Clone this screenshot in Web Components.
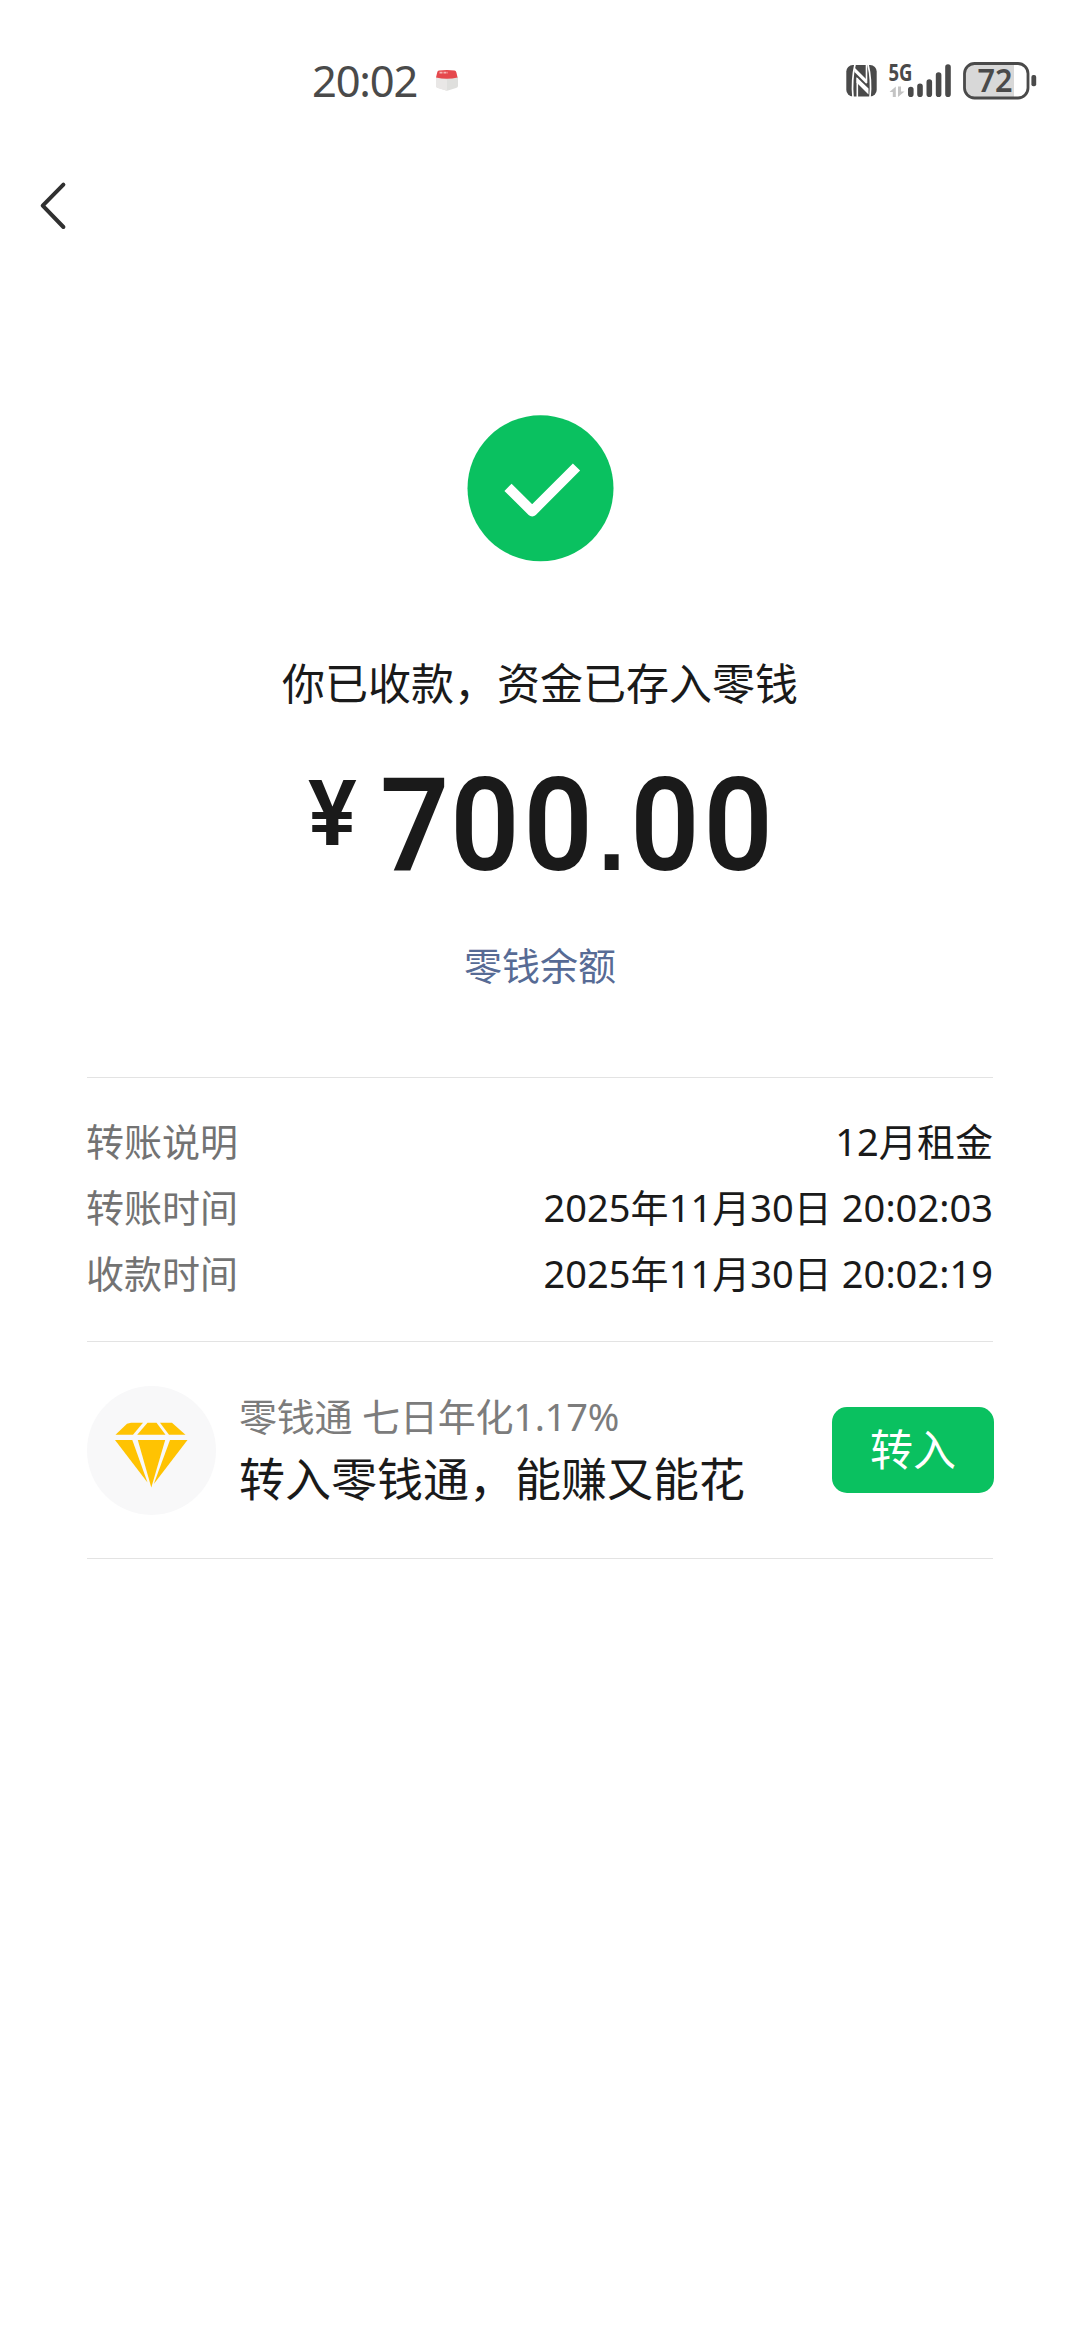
<!DOCTYPE html>
<html lang="zh-CN">
<head>
<meta charset="utf-8">
<title>收款</title>
<style>
html,body{margin:0;background:#fff}
body{width:1080px;height:2340px;overflow:hidden;font-family:"Noto Sans","Noto Sans CJK SC",sans-serif;color:#1a1a1a}
.lead{letter-spacing:1px}
.dot{font-family:"Liberation Sans",sans-serif;font-weight:700;font-size:105px;line-height:0;letter-spacing:5px;margin-left:1.500px}
</style>
</head>
<body>
<pay-page>
  <status-bar slot="top" time="20:02" level="72"></status-bar>
  <nav-bar slot="top"></nav-bar>
  <pay-result>
    <span slot="title">你已收款，资金已存入零钱</span>
    <span slot="amount"><span class="lead">7</span>00<span class="dot">.</span>00</span>
    <span slot="link">零钱余额</span>
  </pay-result>
  <detail-list>
    <detail-row label="转账说明">12月租金</detail-row>
    <detail-row label="转账时间">2025年11月30日 20:02:03</detail-row>
    <detail-row label="收款时间">2025年11月30日 20:02:19</detail-row>
  </detail-list>
  <promo-card>
    <span slot="hint">零钱通 七日年化1.17%</span>
    <span slot="headline">转入零钱通，能赚又能花</span>
    <pay-button slot="action">转入</pay-button>
  </promo-card>
</pay-page>
<script>
function define(name, html) {
  customElements.define(name, class extends HTMLElement {
    constructor() {
      super();
      const t = document.createElement('template');
      t.innerHTML = html;
      this.attachShadow({mode: 'open'}).append(t.content.cloneNode(true));
    }
    connectedCallback() {
      this.shadowRoot.querySelectorAll('[data-attr]').forEach(n => {
        n.textContent = this.getAttribute(n.dataset.attr);
      });
    }
  });
}

define('pay-page', `
<style>
:host{display:flex;flex-direction:column;width:1080px;height:2340px;background:#fff}
main{display:flex;flex-direction:column;padding:0 87px}
</style>
<slot name="top"></slot><main><slot></slot></main>`);

define('status-bar', `
<style>
:host{display:flex;align-items:center;justify-content:space-between;box-sizing:border-box;height:160px;padding:0 40px 0 312px;color:#4a4a4a}
.left{display:flex;align-items:center;gap:17px}
.time{font-size:43.500px;line-height:60px;letter-spacing:-1.200px}
svg{display:block}
</style>
<div class="left">
  <span class="time" data-attr="time"></span>
  <svg width="26" height="24" viewBox="0 0 26 24">
    <path d="M2 9 L24 9 L24 18 Q24 19.500 22 20 L14 22.500 Q13 22.800 12 22.500 L4 20 Q2 19.500 2 18Z" fill="#dfdfdd"/>
    <path d="M2 9 L13 11.500 V22.700 L4 20 Q2 19.500 2 18Z" fill="#e9e7e6"/>
    <path d="M5 2.500 Q13 1.500 20.500 2.500 Q22 2.700 22.400 4.500 L23.600 9.500 Q13 12 2 9.500 L3.200 4.500 Q3.500 2.700 5 2.500Z" fill="#e5484d"/>
    <path d="M5.500 4.700 H14" stroke="#f6b5b5" stroke-width="1.700" stroke-dasharray="3 1"/>
  </svg>
</div>
<svg width="200" height="60" viewBox="840 50 200 60">
  <rect x="846.300" y="65" width="30.400" height="31.500" rx="6.500" fill="#4a4a4a"/>
  <path d="M855 64.500 Q851.400 80 853 97" fill="none" stroke="#fff" stroke-width="1.700"/>
  <path d="M868 64.500 Q871.800 80 870 97" fill="none" stroke="#fff" stroke-width="1.700"/>
  <path d="M854 67 L866.500 79.500 V84 L854.500 72Z" fill="#fff"/>
  <path d="M856.500 77 L868.500 88.500 V94.500 L856.500 82.500Z" fill="#fff"/>
  <path d="M857.300 78 V97" stroke="#fff" stroke-width="1.600"/>
  <path d="M866.500 65 V83" stroke="#fff" stroke-width="1.600"/>
  <text x="888.500" y="81" font-family="Noto Sans" font-weight="700" font-size="23.500" textLength="24" lengthAdjust="spacingAndGlyphs" fill="#4a4a4a">5G</text>
  <g fill="#c4c4c4">
    <path d="M889.500 92 L895.800 86.500 V97 H892.800 V92Z"/>
    <path d="M898 86.500 H901 V91.500 H904.600 L898 97Z"/>
  </g>
  <g stroke="#4a4a4a" stroke-width="5.600" stroke-linecap="round">
    <path d="M910.800 89.500V94.300M920 86.200V94.300M929.300 82V94.300M938.600 75V94.300M948 67V94.300"/>
  </g>
  <path d="M974 64 H1014 V97.500 H974 Q965 97.500 965 88 V73 Q965 64 974 64Z" fill="#d8d8d8"/>
  <rect x="964.500" y="63.500" width="63.500" height="34.500" rx="10" fill="none" stroke="#4a4a4a" stroke-width="2.800"/>
  <rect x="1031.400" y="75" width="4.800" height="11.300" rx="2" fill="#4a4a4a"/>
  <text x="977.500" y="91.700" font-family="Noto Sans" font-weight="600" font-size="32" textLength="35" lengthAdjust="spacingAndGlyphs" fill="#4a4a4a" data-attr="level"></text>
</svg>`);

define('nav-bar', `
<style>
:host{display:flex;align-items:center;height:92px;padding-left:36px}
</style>
<svg width="34" height="52" viewBox="36 180 34 52"><path d="M63.400 184.600 L42.700 205.700 L63.400 227" fill="none" stroke="#303030" stroke-width="4" stroke-linejoin="round" stroke-linecap="round"/></svg>`);

define('pay-result', `
<style>
:host{display:flex;flex-direction:column;align-items:center;padding-top:162px}
svg{display:block}
.title{margin-top:92px;font-size:43px;line-height:60px}
.amount{display:flex;align-items:center;align-self:stretch;height:140px;padding-left:221px;margin-top:42px;font-family:Roboto,sans-serif;font-weight:600;line-height:140px;color:#1a1a1a;white-space:nowrap}
.yen{font-size:91.500px;margin-right:23px;transform:translateY(-12.500px)}
.num{font-size:129px;letter-spacing:4.200px;transform:scaleX(.94);transform-origin:0 50%}
.link{margin-top:44px;font-size:38px;line-height:50px;color:#576b95}
</style>
<svg width="148" height="148" viewBox="466 414 148 148"><circle cx="540.500" cy="488.300" r="73" fill="#0ac160"/><path d="M508 487.300 L532.200 511.300 L576.500 467" fill="none" stroke="#fff" stroke-width="10.200" stroke-linejoin="round"/></svg>
<div class="title"><slot name="title"></slot></div>
<div class="amount"><span class="yen">¥</span><span class="num"><slot name="amount"></slot></span></div>
<div class="link"><slot name="link"></slot></div>`);

define('detail-list', `
<style>
:host{display:flex;flex-direction:column;margin-top:87px;border-top:1px solid #e3e3e3;padding:30px 0 35px}
</style><slot></slot>`);

define('detail-row', `
<style>
:host{display:flex;justify-content:space-between;line-height:66px;font-size:38px}
.label{color:#737373;margin-left:-1px}
.value{letter-spacing:.050px}
</style>
<span class="label" data-attr="label"></span><span class="value"><slot></slot></span>`);

define('promo-card', `
<style>
:host{display:flex;align-items:center;height:216px;border-top:1px solid #e3e3e3;border-bottom:1px solid #e3e3e3}
.badge{display:block;flex:none}
.text{flex:1;display:flex;flex-direction:column;margin-left:23px;padding-bottom:6px;white-space:nowrap}
.hint{font-size:38px;line-height:62px;letter-spacing:-.200px;color:#7c7c7c}
.headline{font-size:46px;line-height:63px}
</style>
<svg class="badge" width="129" height="129" viewBox="0 0 129 129">
  <circle cx="64.500" cy="64.500" r="64.500" fill="#f8f8f9"/>
  <g fill="#ffc302">
    <path d="M44 36.700 H56 L46 48.700 H28.500 L40 37.800Z"/>
    <path d="M60.500 36.700 H69.500 L78.500 48.700 H50.200Z"/>
    <path d="M73 36.700 H85 L98.500 48.700 H82Z"/>
    <path d="M28 54 H45.300 L60.500 96.500Z"/>
    <path d="M50.800 54 H78.200 L64.300 101.500Z"/>
    <path d="M83 54 H100.500 L66.800 98Z"/>
  </g>
</svg>
<div class="text"><span class="hint"><slot name="hint"></slot></span><span class="headline"><slot name="headline"></slot></span></div>
<slot name="action"></slot>`);

define('pay-button', `
<style>
:host{display:flex;align-items:center;justify-content:center;flex:none;width:162px;height:86px;border-radius:15px;background:#0ac160;color:#fff;font-size:43px;line-height:60px;margin-right:-1px}
</style><slot></slot>`);
</script>
</body>
</html>
